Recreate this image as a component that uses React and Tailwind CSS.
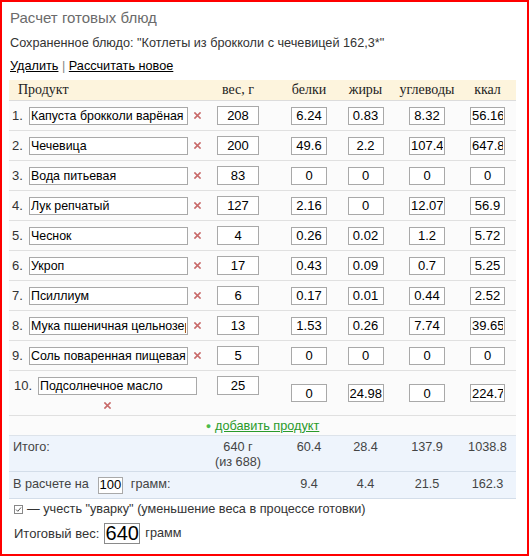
import React from "react";

const rows = [
  [1, "Капуста брокколи варёная", "208", "6.24", "0.83", "8.32", "56.16"],
  [2, "Чечевица", "200", "49.6", "2.2", "107.4", "647.8"],
  [3, "Вода питьевая", "83", "0", "0", "0", "0"],
  [4, "Лук репчатый", "127", "2.16", "0", "12.07", "56.9"],
  [5, "Чеснок", "4", "0.26", "0.02", "1.2", "5.72"],
  [6, "Укроп", "17", "0.43", "0.09", "0.7", "5.25"],
  [7, "Псиллиум", "6", "0.17", "0.01", "0.44", "2.52"],
  [8, "Мука пшеничная цельнозерновая", "13", "1.53", "0.26", "7.74", "39.65"],
  [9, "Соль поваренная пищевая", "5", "0", "0", "0", "0"],
];

const GRID = "grid grid-cols-[194px_70px_72px_41px_82px_39px_9px]";

function XMark() {
  return (
    <svg width="7" height="7" viewBox="0 0 7 7" className="shrink-0">
      <path d="M1 1 L6 6 M6 1 L1 6" stroke="#c86a6a" strokeWidth="1.7" strokeLinecap="square" />
    </svg>
  );
}

function Inp({ value, w, center = true, h = "h-[18px]", size = "text-[13px]" }) {
  return (
    <input
      readOnly
      value={value}
      className={`${w} ${h} ${size} border border-[#a9a9a9] bg-white leading-[16px] text-black px-[1px] outline-none ${center ? "text-center" : "text-left"}`}
    />
  );
}

function NutCells({ r }) {
  return (
    <>
      <div className="flex items-center justify-center">
        <Inp value={r[0]} w="w-[36px]" />
      </div>
      <div className="flex items-center justify-center">
        <Inp value={r[1]} w="w-[36px]" />
      </div>
      <div className="flex items-center justify-center">
        <Inp value={r[2]} w="w-[36px]" />
      </div>
      <div className="flex items-center justify-center">
        <Inp value={r[3]} w="w-[35px]" />
      </div>
      <div />
    </>
  );
}

export default function App() {
  return (
    <div
      className="w-[529px] h-[556px] border-2 border-[#ff0000] bg-white pt-[6px] pl-[7px] text-[#333]"
      style={{ fontFamily: '"Liberation Sans", Arial, sans-serif' }}
    >
      <div className="pl-[1px] text-[15px] leading-[20px] text-[#6b6b6b]">Расчет готовых блюд</div>
      <div className="mt-[6px] pl-[1px] text-[12.7px] leading-[18px] text-[#333]">
        Сохраненное блюдо: "Котлеты из брокколи с чечевицей 162,3*"
      </div>
      <div className="mt-[5px] pl-[1px] text-[12.7px] leading-[18px] text-black">
        <span className="underline">Удалить</span> <span className="text-[#888]">|</span>{" "}
        <span className="underline">Рассчитать новое</span>
      </div>

      <div className="mt-[5px] w-[507px]">
        {/* header */}
        <div
          className={`${GRID} h-[21px] bg-[#fdf4dd] border-b border-[#dcdcdc] text-[14px] leading-[20px] text-[#222]`}
          style={{ fontFamily: '"Liberation Serif", "Times New Roman", serif' }}
        >
          <div className="pl-[9px]">Продукт</div>
          <div className="text-center">вес, г</div>
          <div className="text-center">белки</div>
          <div className="text-center">жиры</div>
          <div className="text-center">углеводы</div>
          <div className="text-center">ккал</div>
          <div />
        </div>

        {rows.map((r) => (
          <div key={r[0]} className={`${GRID} h-[30px] bg-[#fbfbfb] border-b border-[#e0e0e0]`}>
            <div className="flex items-center pl-[3px]">
              <span className="w-[17px] text-[13px] text-[#333]">{r[0]}.</span>
              <Inp value={r[1]} w="w-[159px]" center={false} size="text-[12.4px]" />
              <span className="ml-[6px] flex items-center">
                <XMark />
              </span>
            </div>
            <div className="flex items-center justify-center">
              <Inp value={r[2]} w="w-[42px]" h="h-[19px]" />
            </div>
            <NutCells r={r.slice(3)} />
          </div>
        ))}

        {/* row 10 */}
        <div className={`${GRID} h-[45px] bg-[#fbfbfb] border-b border-[#e0e0e0]`}>
          <div className="flex flex-col pt-[5px]">
            <div className="flex items-center pl-[5px]">
              <span className="w-[24px] text-[13px] text-[#333]">10.</span>
              <Inp value="Подсолнечное масло" w="w-[159px]" center={false} size="text-[12.4px]" />
            </div>
            <div className="flex justify-center pl-[2px] mt-[6px]">
              <XMark />
            </div>
          </div>
          <div className="flex justify-center pt-[5px]">
            <Inp value="25" w="w-[42px]" h="h-[19px]" />
          </div>
          <NutCells r={["0", "24.98", "0", "224.78"]} />
        </div>

        {/* add row */}
        <div className="h-[20px] bg-[#fbfbfb] border-b border-[#dde3ea] flex items-center justify-center text-[12.7px] leading-[18px]">
          <span className="text-[#4cbb4c] text-[9px] mr-[4px]">●</span>
          <span className="underline text-[#2a9a2a]">добавить продукт</span>
        </div>

        {/* Итого */}
        <div className={`${GRID} h-[36px] bg-[#eef4fc] border-b border-[#d3dde9] text-[12.7px] leading-[15px] text-[#444] pt-[4px]`}>
          <div className="pl-[4px]">Итого:</div>
          <div className="text-center">
            640 г
            <br />
            (из 688)
          </div>
          <div className="text-center">60.4</div>
          <div className="text-center">28.4</div>
          <div className="text-center">137.9</div>
          <div className="text-center">1038.8</div>
          <div />
        </div>

        {/* per 100 */}
        <div className={`${GRID} h-[27px] bg-[#eef4fc] border-b border-[#d3dde9] text-[12.7px] text-[#444]`}>
          <div className="flex items-center pl-[4px]">
            <span>В расчете на</span>
            <input
              readOnly
              value="100"
              className="ml-[9px] w-[25px] h-[17px] border border-[#a9a9a9] bg-white text-center text-[13px] text-black outline-none"
            />
            <span className="ml-[8px]">грамм:</span>
          </div>
          <div />
          <div className="flex items-center justify-center">9.4</div>
          <div className="flex items-center justify-center">4.4</div>
          <div className="flex items-center justify-center">21.5</div>
          <div className="flex items-center justify-center">162.3</div>
          <div />
        </div>
      </div>

      {/* checkbox line */}
      <div className="mt-[2px] flex items-center pl-[5px] h-[17px] text-[12.7px] text-[#333]">
        <svg width="9" height="9" viewBox="0 0 9 9" className="mr-[4px]">
          <rect x="0.5" y="0.5" width="8" height="8" fill="white" stroke="#888" />
          <path d="M2 4.5 L3.8 6.3 L7 2.5" fill="none" stroke="#555" strokeWidth="1" />
        </svg>
        <span>— учесть "уварку" (уменьшение веса в процессе готовки)</span>
      </div>

      {/* итоговый вес */}
      <div className="mt-[5px] flex items-center pl-[5px] text-[13px] text-[#333]">
        <span>Итоговый вес:</span>
        <input
          readOnly
          value="640"
          className="ml-[5px] w-[36px] h-[21px] border border-[#8a8a8a] bg-white text-center text-[20px] leading-[19px] text-black outline-none"
        />
        <span className="ml-[5px] text-[12.7px]">грамм</span>
      </div>
    </div>
  );
}
